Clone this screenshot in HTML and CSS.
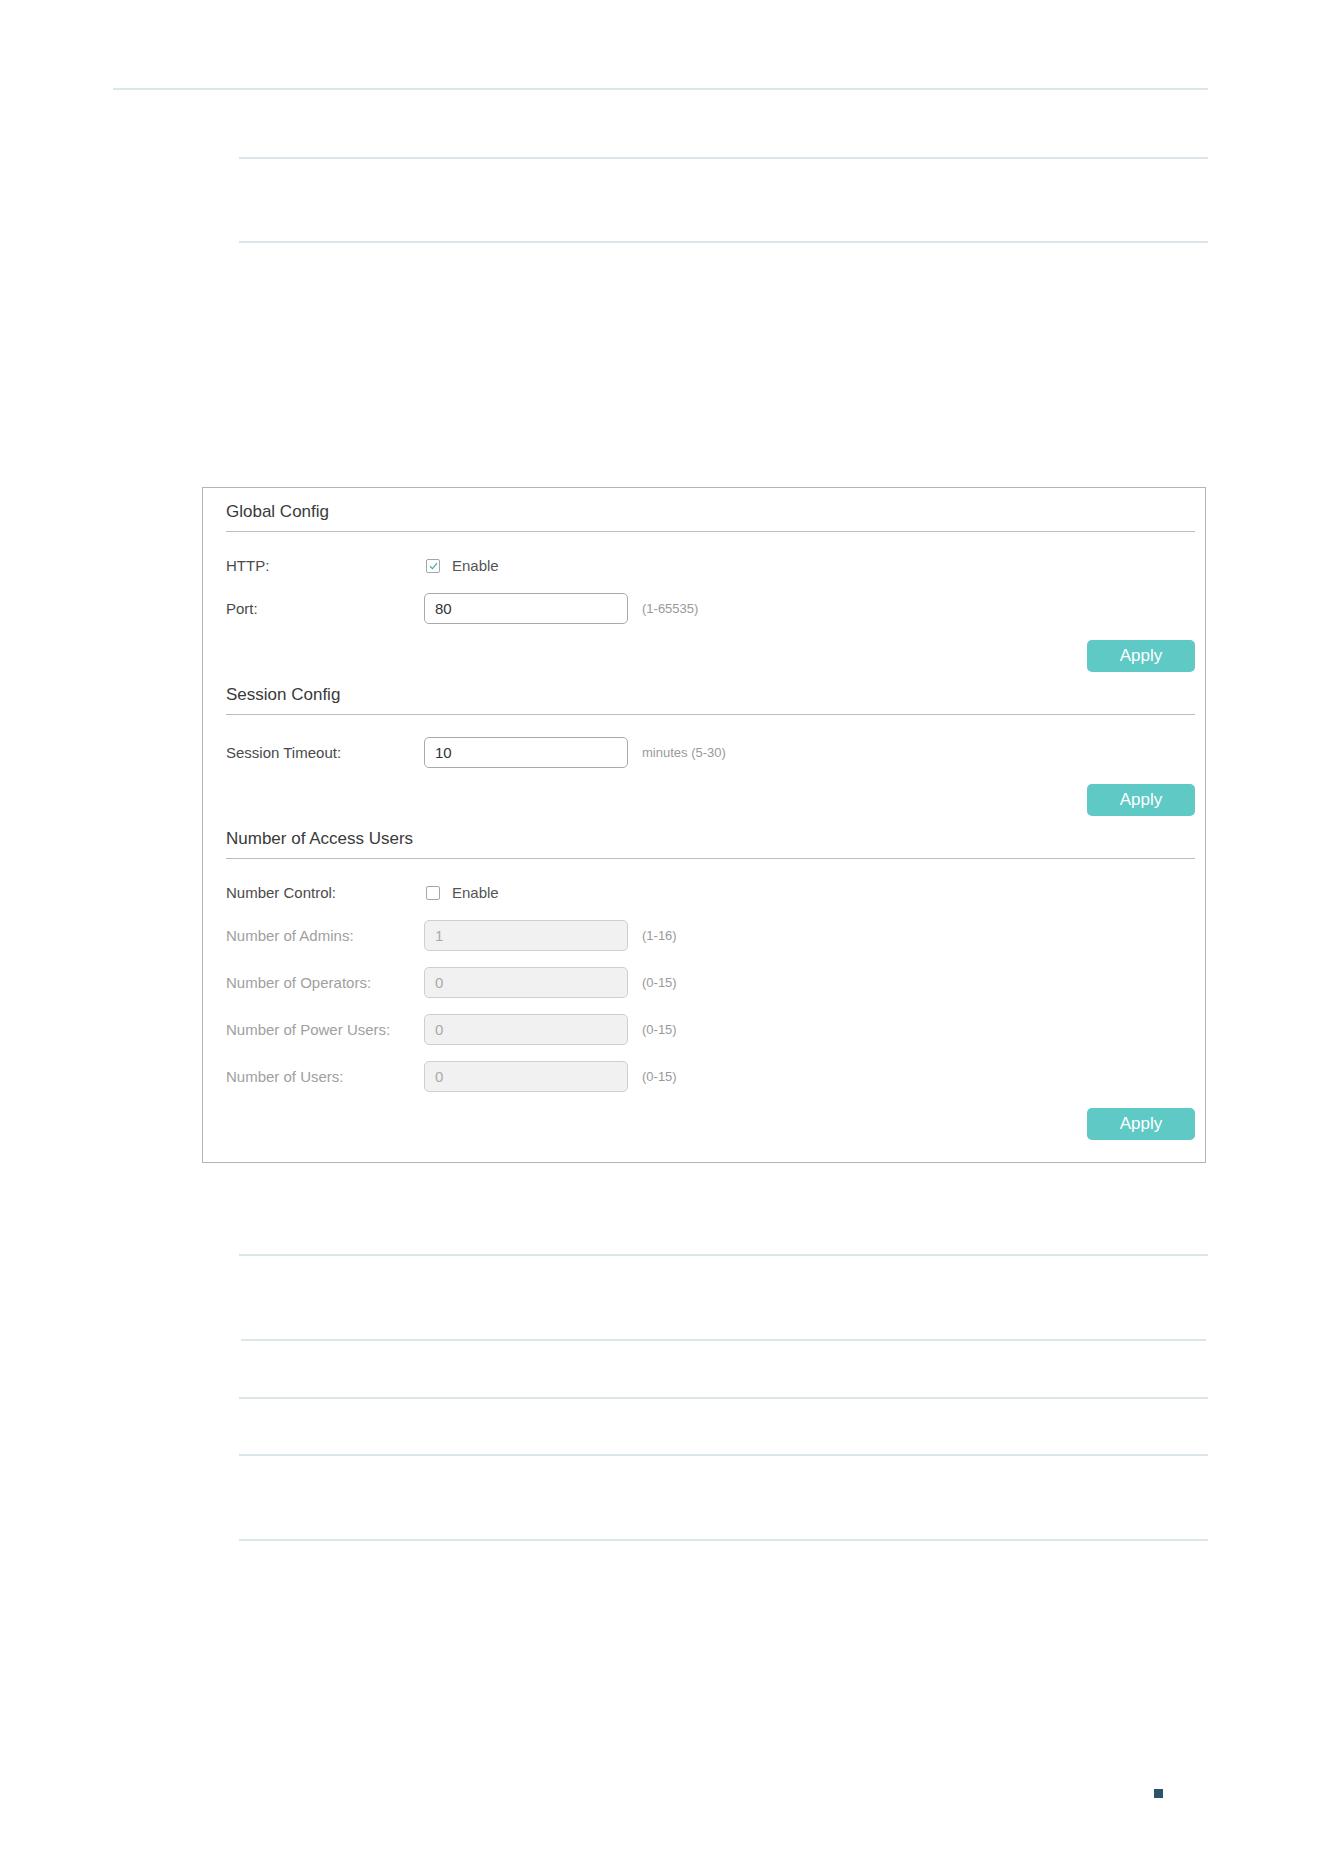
FILE: index.html
```html
<!DOCTYPE html>
<html lang="en">
<head>
    <meta charset="UTF-8">
    <meta name="viewport" content="width=device-width, initial-scale=1.0">
    <title>HTTP Config</title>
    <link rel="stylesheet" href="styles.css">
</head>
<body>

    <div class="doc">
        <div class="rule-top"></div>

        <!-- empty table above the screenshot -->
        <div class="sheet sheet-top">
            <div class="sheet-row"></div>
        </div>

        <div class="panel">
            <!-- Global config -->
            <div class="panel-head">Global Config</div>
            <div class="panel-body">
                <div class="row row-check">
                    <span class="label">HTTP:</span>
                    <label class="check">
                        <span class="box checked">
                            <svg width="9" height="8" viewBox="0 0 9 8"><path d="M1 4.2 L3.5 6.6 L8 1.2" fill="none" stroke="#3fa9ad" stroke-width="1.2"/></svg>
                        </span>
                        Enable
                    </label>
                </div>
                <div class="row">
                    <span class="label">Port:</span>
                    <input class="field" type="text" value="80">
                    <span class="hint">(1-65535)</span>
                </div>
                <div class="actions"><button class="apply">Apply</button></div>
            </div>

            <!-- Session config -->
            <div class="panel-head">Session Config</div>
            <div class="panel-body">
                <div class="row">
                    <span class="label">Session Timeout:</span>
                    <input class="field" type="text" value="10">
                    <span class="hint">minutes (5-30)</span>
                </div>
                <div class="actions"><button class="apply">Apply</button></div>
            </div>

            <!-- Number of access users -->
            <div class="panel-head">Number of Access Users</div>
            <div class="panel-body">
                <div class="row row-check">
                    <span class="label">Number Control:</span>
                    <label class="check">
                        <span class="box"></span>
                        Enable
                    </label>
                </div>
                <div class="row off">
                    <span class="label">Number of Admins:</span>
                    <input class="field" type="text" value="1" disabled>
                    <span class="hint">(1-16)</span>
                </div>
                <div class="row off">
                    <span class="label">Number of Operators:</span>
                    <input class="field" type="text" value="0" disabled>
                    <span class="hint">(0-15)</span>
                </div>
                <div class="row off">
                    <span class="label">Number of Power Users:</span>
                    <input class="field" type="text" value="0" disabled>
                    <span class="hint">(0-15)</span>
                </div>
                <div class="row off">
                    <span class="label">Number of Users:</span>
                    <input class="field" type="text" value="0" disabled>
                    <span class="hint">(0-15)</span>
                </div>
                <div class="actions"><button class="apply">Apply</button></div>
            </div>
        </div>

        <!-- empty table below the screenshot -->
        <div class="sheet sheet-bottom">
            <div class="sheet-row tall inset"></div>
            <div class="sheet-row mid"></div>
            <div class="sheet-row short"></div>
            <div class="sheet-row short2"></div>
        </div>

        <div class="footer">
            <span class="mark"></span>
        </div>
    </div>

</body>
</html>
```

FILE: styles.css
```css
/* page frame */
body {
    margin: 0;
    background: #fff;
    font-family: "Liberation Sans", Arial, sans-serif;
    color: #333;
}

.doc {
    padding-top: 88px;
}

.rule-top {
    margin-left: 113px;
    width: 1095px;
    border-top: 2px solid #dce5e9;
}

/* empty table rules */
.sheet {
    margin-left: 239px;
    width: 969px;
}

.sheet-top {
    margin-top: 67px;
    border-top: 2px solid #dce5e9;
}

.sheet-top .sheet-row {
    height: 82px;
    border-bottom: 2px solid #dce5e9;
}

.sheet-bottom {
    margin-top: 91px;
    border-top: 2px solid #dce5e9;
}

.sheet-bottom .sheet-row {
    border-bottom: 2px solid #dce5e9;
}

.sheet-row.tall { height: 83px; }
.sheet-row.mid { height: 56px; }
.sheet-row.short { height: 55px; }
.sheet-row.short2 { height: 83px; }

.sheet-row.inset {
    margin: 0 2px;
}

/* settings panel */
.panel {
    box-sizing: border-box;
    margin-top: 244px;
    margin-left: 202px;
    width: 1004px;
    border: 1px solid #b4b4b4;
    padding: 1px 10px 22px 23px;
}

.panel-head {
    padding: 13px 0 9px;
    line-height: 20px;
    font-size: 17px;
    color: #3a3a3a;
    border-bottom: 1px solid #b9bec1;
}

.panel-body {
    display: flex;
    flex-direction: column;
    gap: 16px;
    padding-top: 22px;
}

.row {
    display: flex;
    align-items: center;
    height: 31px;
    font-size: 15px;
}

.row-check {
    height: 23px;
}

.label {
    width: 198px;
    color: #4a4a4a;
}

.row.off .label {
    color: #a0a0a0;
}

.field {
    box-sizing: border-box;
    width: 204px;
    height: 31px;
    padding: 0 10px;
    border: 1px solid #a9a9a9;
    border-radius: 5px;
    font-family: "Liberation Sans", Arial, sans-serif;
    font-size: 15px;
    color: #333;
    background: #fff;
    outline: none;
}

.field:disabled {
    background: #f1f1f1;
    border-color: #cfcfcf;
    color: #aaa;
}

.hint {
    margin-left: 14px;
    font-size: 13px;
    color: #9a9a9a;
}

.check {
    display: flex;
    align-items: center;
    margin-left: 2px;
    color: #555;
}

.box {
    box-sizing: border-box;
    display: flex;
    align-items: center;
    justify-content: center;
    width: 14px;
    height: 14px;
    margin-right: 12px;
    border: 1px solid #a6a6a6;
    border-radius: 2px;
    background: #fff;
}

.actions {
    display: flex;
    justify-content: flex-end;
}

.apply {
    width: 108px;
    height: 32px;
    border: none;
    border-radius: 5px;
    background: #5ec9c5;
    color: #fff;
    font-family: "Liberation Sans", Arial, sans-serif;
    font-size: 17px;
    cursor: pointer;
}

/* page footer */
.footer {
    display: flex;
    justify-content: flex-end;
    margin-top: 248px;
    padding-right: 161px;
}

.mark {
    width: 9px;
    height: 9px;
    background: #2c5468;
}
```
